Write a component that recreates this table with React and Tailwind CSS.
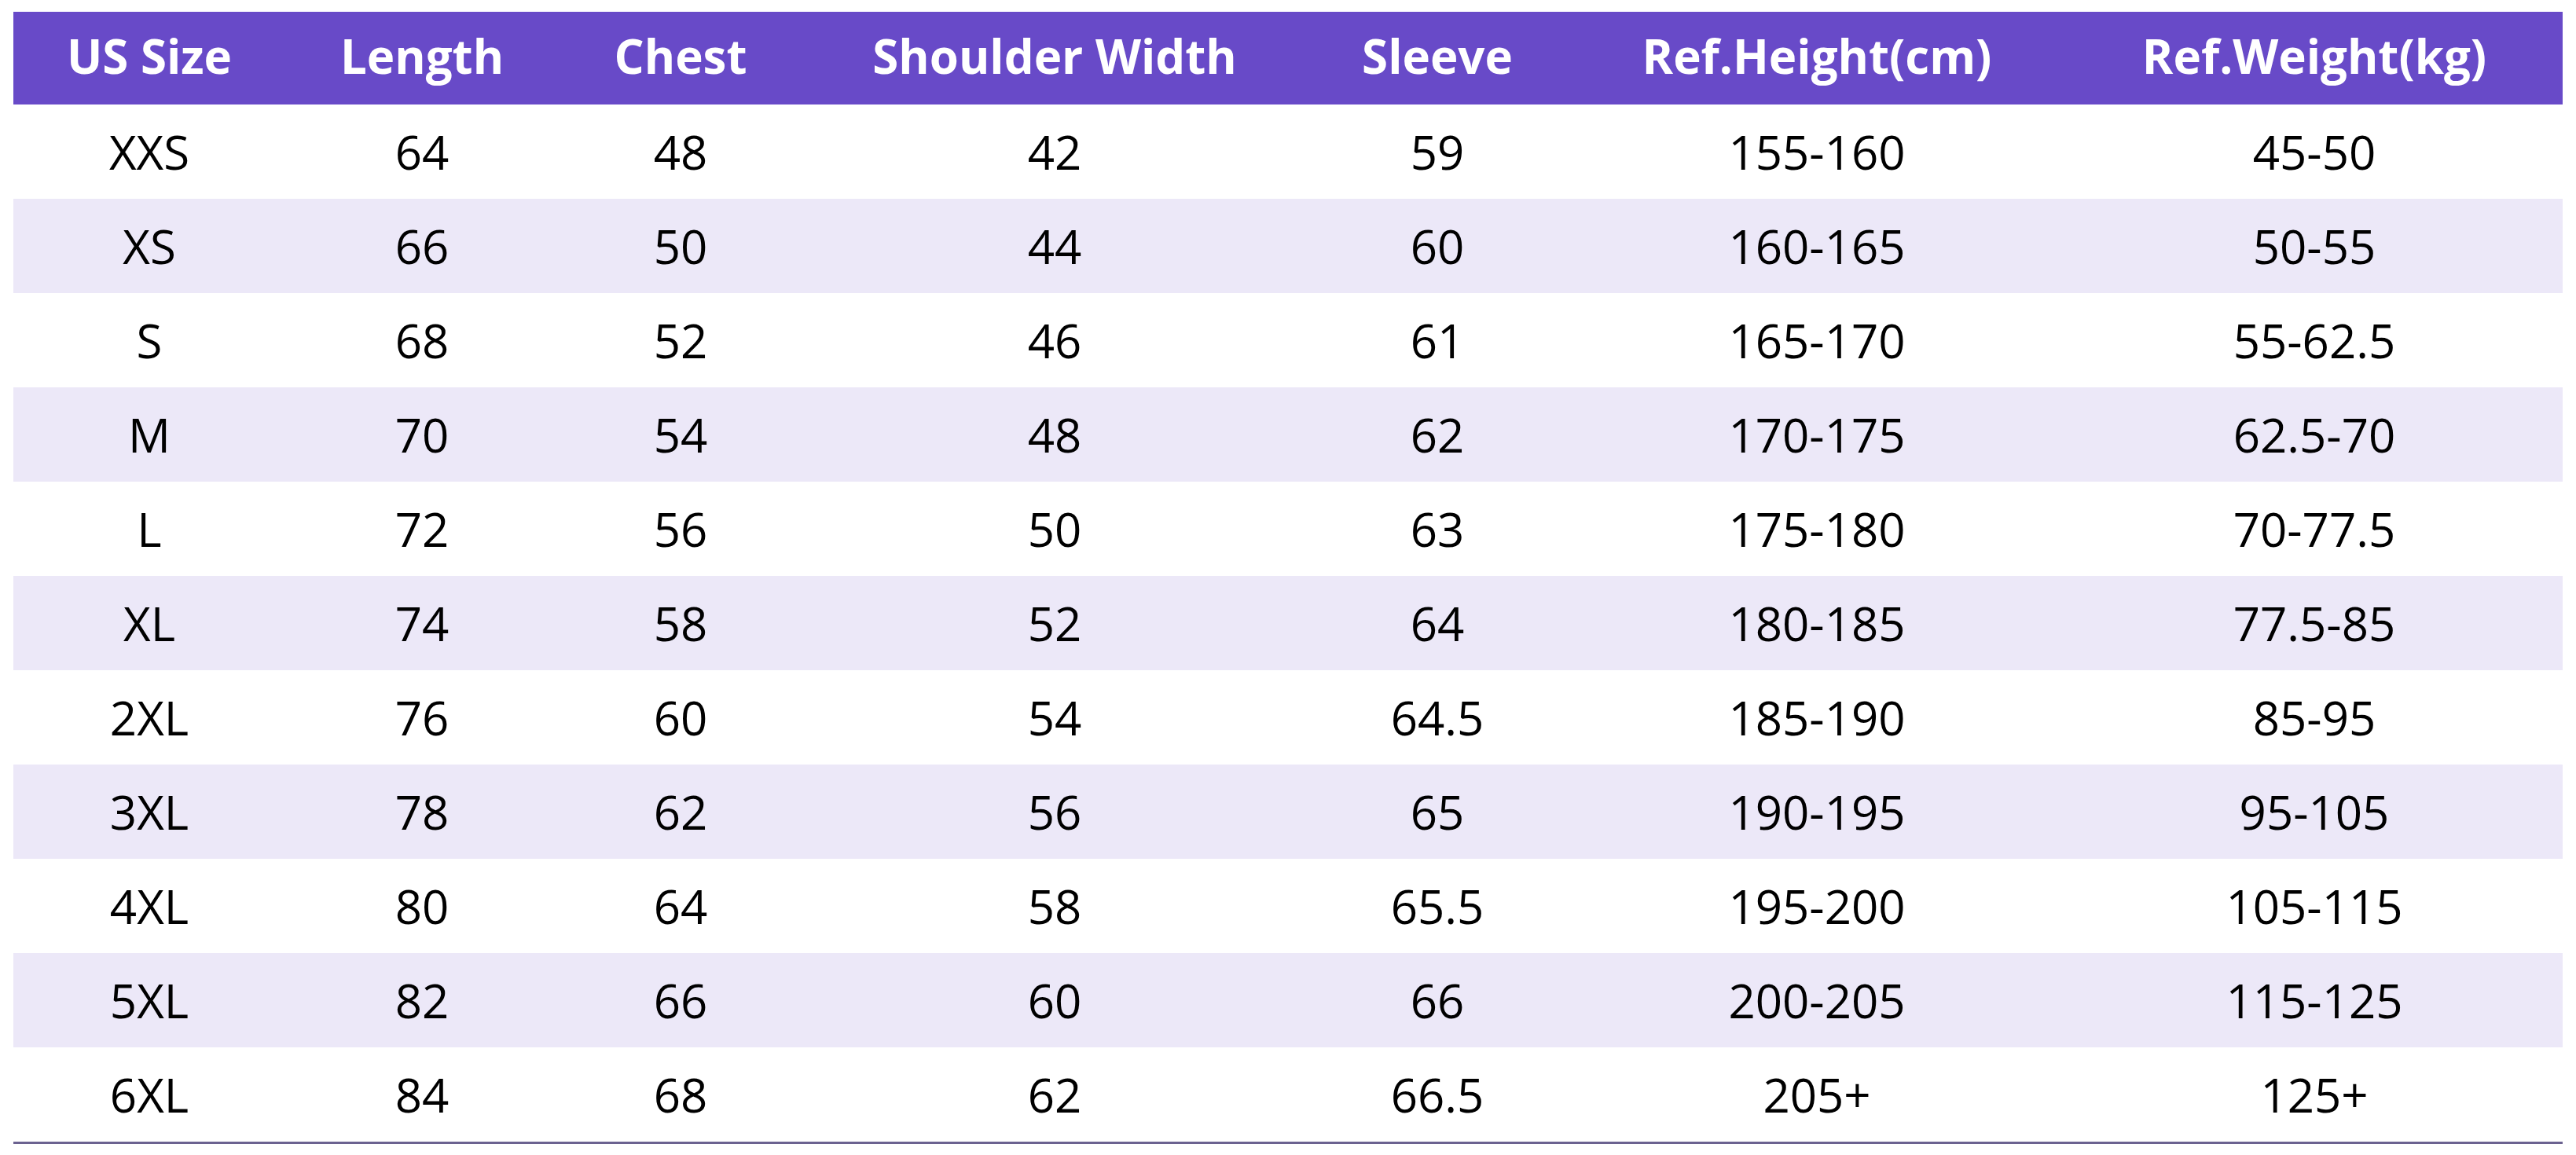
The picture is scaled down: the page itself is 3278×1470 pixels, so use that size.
import React from "react";

const headers = ["US Size", "Length", "Chest", "Shoulder Width", "Sleeve", "Ref.Height(cm)", "Ref.Weight(kg)"];
const rows = [
  ["XXS", "64", "48", "42", "59", "155-160", "45-50"],
  ["XS", "66", "50", "44", "60", "160-165", "50-55"],
  ["S", "68", "52", "46", "61", "165-170", "55-62.5"],
  ["M", "70", "54", "48", "62", "170-175", "62.5-70"],
  ["L", "72", "56", "50", "63", "175-180", "70-77.5"],
  ["XL", "74", "58", "52", "64", "180-185", "77.5-85"],
  ["2XL", "76", "60", "54", "64.5", "185-190", "85-95"],
  ["3XL", "78", "62", "56", "65", "190-195", "95-105"],
  ["4XL", "80", "64", "58", "65.5", "195-200", "105-115"],
  ["5XL", "82", "66", "60", "66", "200-205", "115-125"],
  ["6XL", "84", "68", "62", "66.5", "205+", "125+"],
];

const cols = "grid grid-cols-[346px_348px_310px_642px_332px_634px_632px]";

export default function App() {
  return (
    <div
      className="w-[3278px] h-[1470px] bg-white pt-[15px] pl-[17px]"
      style={{ fontFamily: '"Open Sans", "Noto Sans", sans-serif' }}
    >
      <div className="w-[3244px] border-b-[3px] border-[#6b6290]">
        <div className={`${cols} h-[118px] bg-[#684ac8] text-white font-bold text-[60px] items-center`}>
          {headers.map((h) => (
            <div key={h} className="text-center leading-none pb-[6px]">{h}</div>
          ))}
        </div>
        {rows.map((r, i) => (
          <div
            key={r[0]}
            className={`${cols} h-[120px] items-center text-[60px] text-black ${i % 2 === 1 ? "bg-[#ece8f8]" : "bg-white"}`}
          >
            {r.map((c, j) => (
              <div key={j} className="text-center leading-none">{c}</div>
            ))}
          </div>
        ))}
      </div>
    </div>
  );
}
